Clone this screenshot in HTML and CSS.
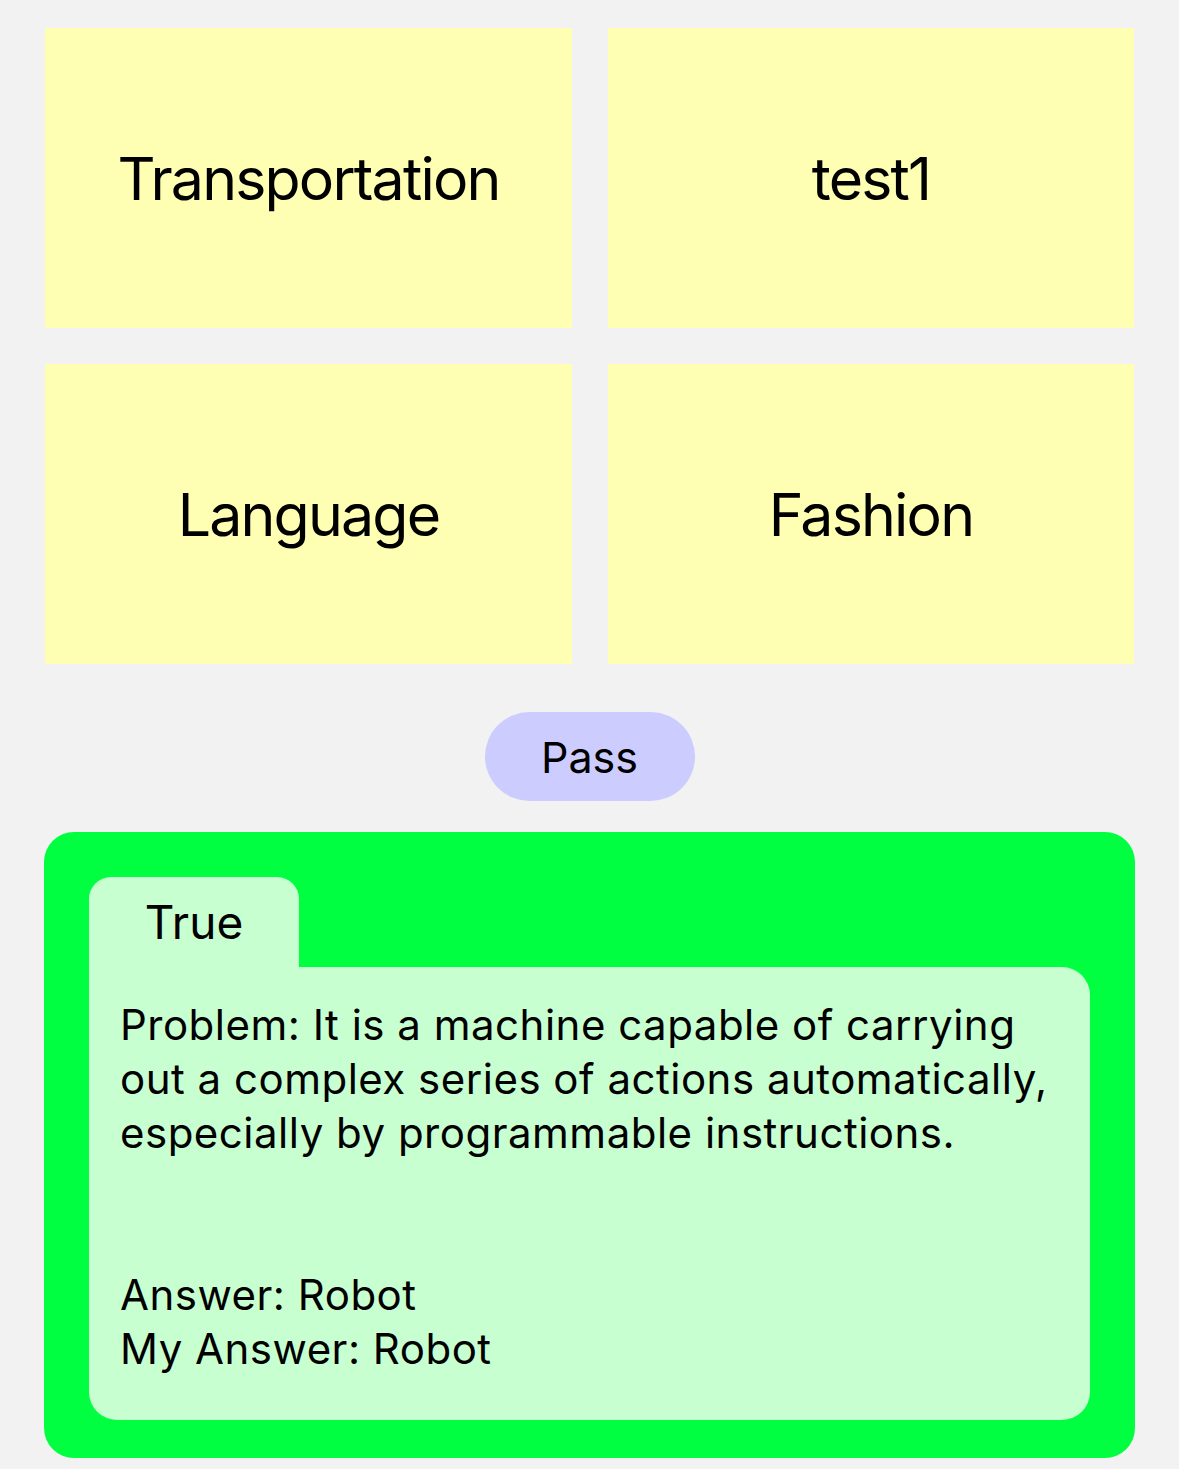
FILE: index.html
```html
<!DOCTYPE html>
<html lang="en">
<head>
<meta charset="utf-8">
<title>Quiz</title>
<link rel="stylesheet" href="styles.css">
</head>
<body>
<div class="page">
  <div class="grid">
    <div class="card">Transportation</div>
    <div class="card">test1</div>
    <div class="card">Language</div>
    <div class="card">Fashion</div>
  </div>
  <div class="pass-row">
    <button class="pass">Pass</button>
  </div>
  <div class="result">
    <div class="tab">True</div>
    <div class="result-body">Problem: It is a machine capable of carrying out a complex series of actions automatically, especially by programmable instructions.


Answer: Robot
My Answer: Robot</div>
  </div>
</div>
</body>
</html>
```
FILE: styles.css
```css
html, body {
  margin: 0;
  padding: 0;
  background: #f2f2f2;
}
body {
  font-family: Inter, "Noto Sans", "Liberation Sans", sans-serif;
  color: #000;
}
.page {
  padding: 28px 45px 0 45px;
}
.grid {
  display: grid;
  grid-template-columns: 527px 526px;
  column-gap: 36px;
  row-gap: 36px;
}
.card {
  height: 300px;
  background: #ffffb3;
  display: flex;
  align-items: center;
  justify-content: center;
  font-size: 59px;
  letter-spacing: -1.8px;
}
.pass-row {
  display: flex;
  justify-content: center;
  margin-top: 48px;
}
.pass {
  width: 210px;
  height: 89px;
  border: none;
  border-radius: 45px;
  background: #ccccff;
  font-family: inherit;
  font-size: 43px;
  color: #000;
  padding: 0;
}
.result {
  margin: 31px -1px 0 -1px;
  background: #00ff40;
  border-radius: 30px;
  padding: 45px 45px 38px 45px;
}
.tab {
  width: 210px;
  height: 90px;
  background: #c8ffd0;
  border-radius: 22px 22px 0 0;
  display: flex;
  align-items: center;
  justify-content: center;
  font-size: 46px;
}
.result-body {
  background: #c8ffd0;
  border-radius: 0 28px 28px 28px;
  padding: 31px 20px 44px 31px;
  font-size: 42px;
  letter-spacing: 0.5px;
  line-height: 54px;
  white-space: pre-line;
}
```
